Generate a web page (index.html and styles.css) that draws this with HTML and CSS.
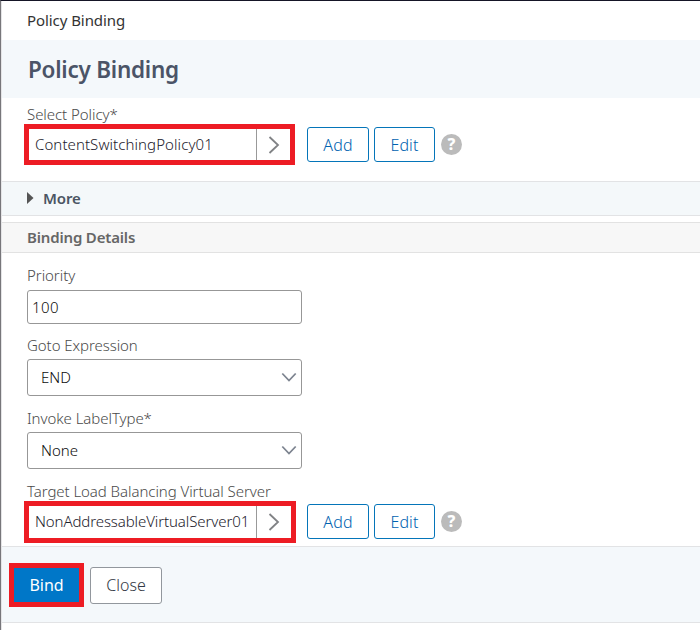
FILE: index.html
```html
<!DOCTYPE html>
<html lang="en">
<head>
<meta charset="utf-8">
<title>Policy Binding</title>
<link rel="stylesheet" href="styles.css">
</head>
<body>
<main class="page">
  <nav class="crumb"><span>Policy Binding</span></nav>
  <header class="title"><h1>Policy Binding</h1></header>

  <section class="select-policy">
    <div class="label"><span>Select Policy*</span></div>
    <div class="picker-row">
      <div class="picker">
        <span class="picker-value">ContentSwitchingPolicy01</span>
        <span class="picker-go"><svg width="12" height="18" viewBox="0 0 12 18"><path d="M1.5 1 10 9 1.5 17"/></svg></span>
      </div>
      <button class="btn add"><span>Add</span></button>
      <button class="btn edit"><span>Edit</span></button>
      <span class="help">?</span>
    </div>
  </section>

  <section class="more"><svg width="7" height="12" viewBox="0 0 7 12"><path d="M0 0 6.5 6 0 12z"/></svg><span>More</span></section>
  <h2 class="details"><span>Binding Details</span></h2>

  <section class="form">
    <div class="label priority"><span>Priority</span></div>
    <div class="input"><span>100</span></div>
    <div class="label goto"><span>Goto Expression</span></div>
    <div class="select"><span>END</span><svg width="16" height="10" viewBox="0 0 16 10"><path d="M1.3 1.5 8 8.5 14.7 1.5"/></svg></div>
    <div class="label invoke"><span>Invoke LabelType*</span></div>
    <div class="select"><span>None</span><svg width="16" height="10" viewBox="0 0 16 10"><path d="M1.3 1.5 8 8.5 14.7 1.5"/></svg></div>
    <div class="label target"><span>Target Load Balancing Virtual Server</span></div>
    <div class="picker-row">
      <div class="picker server">
        <span class="picker-value">NonAddressableVirtualServer01</span>
        <span class="picker-go"><svg width="12" height="18" viewBox="0 0 12 18"><path d="M1.5 1 10 9 1.5 17"/></svg></span>
      </div>
      <button class="btn add"><span>Add</span></button>
      <button class="btn edit"><span>Edit</span></button>
      <span class="help">?</span>
    </div>
  </section>

  <footer class="footer">
    <button class="bind"><span>Bind</span></button>
    <button class="close"><span>Close</span></button>
  </footer>
</main>
</body>
</html>
```

FILE: styles.css
```css
* { box-sizing: border-box; }
body { margin: 0; background: #fff; font: 15px/20px "Noto Sans", "Open Sans", sans-serif; color: #333; overflow: hidden; }
h1, h2 { margin: 0; }
button { font: inherit; padding: 0; margin: 0; }
svg { display: block; flex: none; fill: none; stroke: #808285; stroke-width: 1.8; }
span { white-space: nowrap; }
.page { height: 630px; border-top: 1px solid #151526; border-left: 1px solid #77767a; box-shadow: inset 1px 0 #e4e4e6; padding-left: 1px; }
.crumb { height: 39px; padding: 9px 0 0 25px; letter-spacing: -.07px; }
.title { height: 58px; background: #f4f8fb; padding: 16px 0 0 26px; }
.title h1 { font-size: 22.5px; line-height: 28px; font-weight: 600; color: #4b5467; letter-spacing: -.25px; }
.select-policy { height: 83px; padding: 6px 0 0 22px; }
.label { height: 20px; padding-left: 3px; color: #4a4a4a; font-weight: 300; letter-spacing: -.06px; }
.picker-row { display: flex; align-items: flex-start; }
.picker { width: 271px; height: 41px; border: 5px solid #ed1c24; display: flex; background: #fff; }
.picker-value { width: 227px; padding: 5px 0 0 6px; font-weight: 300; letter-spacing: .08px; color: #1c212c; }
.picker-go { border-left: 1px solid #999; flex: 1; padding: 7px 0 0 11px; }
.btn { height: 35px; margin-top: 3px; border: 1px solid #0575b9; border-radius: 3px; background: #fff; color: #0062b0; font-size: 16px; font-weight: 300; letter-spacing: .15px; }
.add { width: 62px; margin-left: 12px; }
.edit { width: 61px; margin-left: 5px; }
.help { width: 21px; height: 21px; border-radius: 50%; margin: 10px 0 0 6px; background: #bbb; color: #fff; font-weight: 800; font-size: 16px; line-height: 21px; text-align: center; }
.more { height: 35px; background: #f4f8fa; border: solid #e2e3e5; border-width: 1px 0; display: flex; align-items: center; padding: 0 0 1px 25px; gap: 9px; font-weight: 600; color: #4b5563; letter-spacing: -.1px; }
.more svg { fill: #555; stroke: none; }
.details { height: 31px; margin-top: 6px; background: #f7f7f7; border: solid #e2e2e2; border-width: 1px 0; padding: 4px 0 0 25px; font-size: 15px; line-height: 20px; font-weight: 600; color: #666; letter-spacing: -.17px; }
.form { height: 293px; padding: 13px 0 0 22px; }
.priority { height: 24px; margin-top: -1px; margin-bottom: 1px; }
.input, .select { width: 275px; margin-left: 3px; border: 1px solid #979797; border-radius: 3px; display: flex; align-items: center; color: #0c0c0c; font-weight: 300; }
.input { height: 34px; padding-left: 4px; letter-spacing: .4px; }
.select { height: 37px; padding: 0 4px 2px 13px; justify-content: space-between; letter-spacing: 0; }
.select svg { stroke: #7d8490; }
.goto { height: 35px; padding-top: 11px; }
.invoke { height: 36px; padding-top: 12px; }
.target { height: 32px; padding-top: 12px; }
.server { width: 272px; height: 42px; }
.server .picker-value { letter-spacing: -.1px; }
.server + .add { margin-left: 11px; }
.footer { height: 77px; background: #f4f8fb; border: solid #e2e3e5; border-width: 1px 0; display: flex; padding: 16px 0 0 7px; }
.bind { width: 75px; height: 44px; border: 5px solid #ed1c24; background: #0077c8; color: #fff; font-size: 16px; font-weight: 450; letter-spacing: -.1px; }
.close { width: 72px; height: 37px; margin: 4px 0 0 6px; padding-bottom: 1px; border: 1px solid #92979d; border-radius: 3px; background: #fff; color: #333945; font-size: 16px; font-weight: 300; }
```
